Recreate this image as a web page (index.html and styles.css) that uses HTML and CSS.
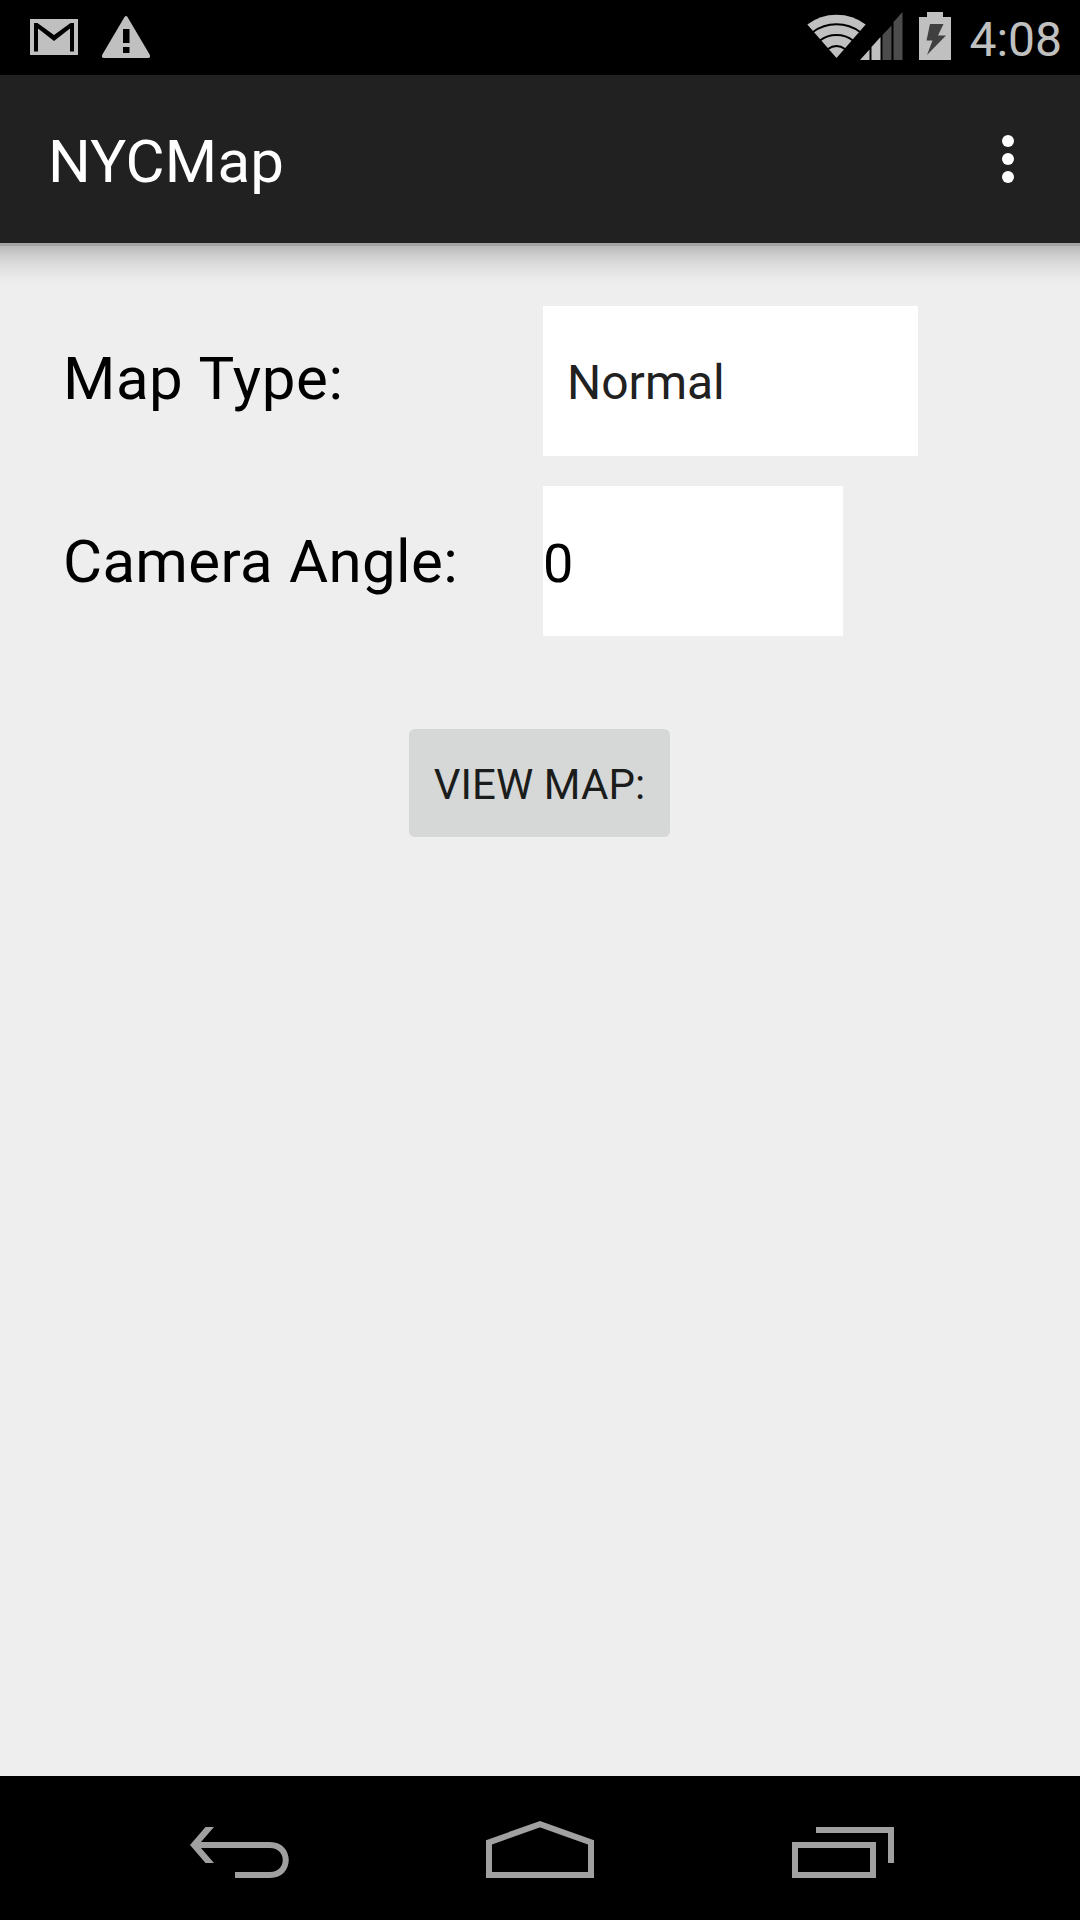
FILE: index.html
```
<!DOCTYPE html>
<html lang="en">
  <head>
    <meta charset="UTF-8" />
    <meta name="viewport" content="width=device-width, initial-scale=1.0" />
    <title>NYCMap</title>
    <link rel="stylesheet" href="styles.css">
  </head>
  <body>
    <div class="status">
      <div class="notices">
        <svg class="mail" width="48" height="36" viewBox="0 0 48 36">
          <rect width="48" height="36" fill="#c0c0c0" />
          <path d="M4 32.500V4h3.500L24 16 40.500 4H44v28.500h-4V9.500L24 22 8 9.500v23z" fill="#000" />
        </svg>
        <svg class="alert" width="48" height="42" viewBox="0 0 48 42">
          <path d="M22.500 1Q24-1 25.500 1L47.600 38.500Q49 42 46 42H2Q-1 42 .4 38.500z" fill="#c0c0c0" />
          <path d="M21 13h6.500v14H21zM21 31h6.500v6H21z" fill="#000" />
        </svg>
      </div>
      <div class="system">
        <svg class="wifi" width="96" height="48" viewBox="0 0 96 48">
          <path d="M29.500 46 .3 12.500Q13 2.700 29.500 2.700T58.700 12.500z" fill="#c0c0c0" />
          <g fill="none" stroke="#000" stroke-width="2">
            <path d="M6 20Q16 12.200 29.500 12.200T53 20" />
            <path d="M13 28.500Q20 23 29.500 23T46 28.500" />
            <path d="M21 37Q25 34 29.500 34T38 37" />
          </g>
          <path d="M53 48 62.500 37.500V48zM64.500 48V35L73.500 25v23z" fill="#c0c0c0" />
          <path d="M75.500 48V23L84.500 13.500V48zM86.500 48V10L95.500 0v48z" fill="#4c4c4c" />
        </svg>
        <svg class="battery" width="32" height="48" viewBox="0 0 32 48">
          <path d="M0 5h8V0h16v5h8v43H0z" fill="#c0c0c0" />
          <path d="M11 12h13.500L19 23.500h8L8 43 13.500 28.500H7.500z" fill="#404040" />
        </svg>
        <span class="clock">4:08</span>
      </div>
    </div>
    <div class="appbar">
      <h1>NYCMap</h1>
      <div class="more">
        <i></i>
        <i></i>
        <i></i>
      </div>
    </div>
    <div class="content">
      <div class="form">
        <span class="label type">Map Type:</span>
        <div class="spinner">Normal</div>
        <span class="label angle">Camera Angle:</span>
        <div class="field">0</div>
      </div>
      <button class="view">VIEW MAP:</button>
    </div>
    <div class="navbar">
      <svg class="back" width="99" height="51" viewBox="0 0 99 51">
        <path d="M15.500 0H24L11 15H80C105 15 105 51 80 51H45V45H80C97 45 97 21 80 21H11L24 36H15.500L0 18z" fill="#a0a0a0" />
      </svg>
      <svg class="home" width="108" height="57" viewBox="0 0 108 57">
        <path d="M3 54V21.300L54 3.200 105 21.300V54z" fill="none" stroke="#a0a0a0" stroke-width="6" />
      </svg>
      <svg class="recent" width="102" height="51" viewBox="0 0 102 51">
        <path d="M3 18H81V48H3zM24 3H99V36" fill="none" stroke="#a0a0a0" stroke-width="6" />
      </svg>
    </div>
  </body>
</html>
```

FILE: styles.css
```
* {
  margin: 0;
  padding: 0;
  box-sizing: border-box;
}
body {
  display: flex;
  flex-direction: column;
  width: 1080px;
  height: 1920px;
  background: #eeeeee;
  font-family: Roboto, sans-serif;
  overflow: hidden;
}
svg {
  display: block;
}
.status {
  display: flex;
  justify-content: space-between;
  height: 75px;
  padding: 0 18px 0 30px;
  background: #000;
}
.notices {
  display: flex;
  gap: 24px;
}
.mail {
  margin-top: 19px;
}
.alert {
  margin-top: 16px;
}
.system {
  display: flex;
}
.wifi {
  margin-top: 12px;
}
.battery {
  margin: 12px 18px 0 16px;
}
.clock {
  color: #c0c0c0;
  font-size: 48px;
  line-height: 79px;
}
.appbar {
  display: flex;
  justify-content: space-between;
  height: 168px;
  padding: 0 66px 0 48px;
  background: #212121;
}
.appbar h1 {
  color: #fff;
  font-size: 60px;
  font-weight: 400;
  letter-spacing: 0.2px;
  line-height: 173px;
}
.more {
  display: flex;
  flex-direction: column;
  gap: 6px;
  padding-top: 60px;
}
.more i {
  width: 12px;
  height: 12px;
  border-radius: 50%;
  background: #fff;
}
/* shadow under the bar */
.content {
  flex: 1;
  padding: 63px 0 0 63px;
  background: linear-gradient(#a3a3a3 0, #a3a3a3 3px, #b9b9b9 3px, #cdcdcd 12px, #dedede 23px, #ebebeb 36px, #eeeeee 42px);
}
.form {
  display: grid;
  grid-template-columns: 480px auto;
  grid-template-rows: 150px 150px;
  row-gap: 30px;
  justify-content: start;
}
.label {
  color: #000;
  font-size: 60px;
  white-space: nowrap;
  word-spacing: 1px;
}
.type {
  letter-spacing: 0.55px;
  line-height: 145px;
}
.angle {
  letter-spacing: 0.33px;
  line-height: 151px;
}
.spinner {
  width: 375px;
  padding-left: 24px;
  background: #fff;
  color: #212121;
  font-size: 48px;
  line-height: 153px;
}
.field {
  width: 300px;
  background: #fff;
  color: #000;
  font-size: 54px;
  line-height: 155px;
}
.view {
  display: block;
  width: 261px;
  height: 108px;
  margin: 93px 0 0 346px;
  padding-top: 3px;
  border: 0;
  border-radius: 6px;
  background: #d6d8d7;
  color: #1b1c1c;
  font-family: inherit;
  font-size: 42px;
  letter-spacing: 0.1px;
  white-space: nowrap;
}
.navbar {
  display: flex;
  height: 144px;
  padding-left: 190px;
  background: #000;
}
.back {
  margin-top: 51px;
}
.home {
  margin: 45px 198px 0 197px;
}
.recent {
  margin-top: 51px;
}
```
